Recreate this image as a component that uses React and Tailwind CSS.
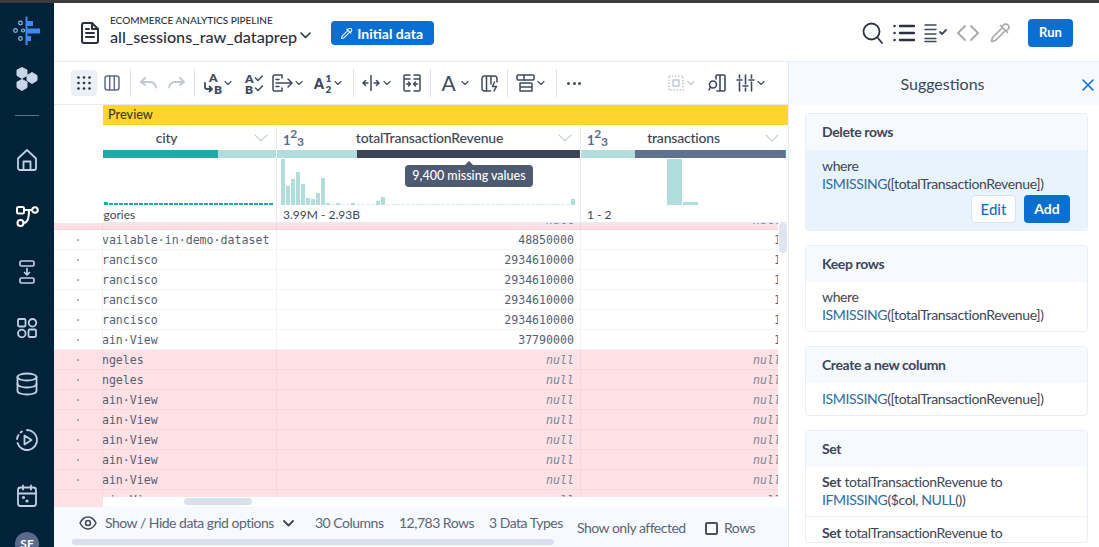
import React from "react";

const S = ({ w, h, vb, children, className = "", sw = 1.6 }) => (
  <svg width={w} height={h} viewBox={vb || `0 0 ${w} ${h}`} fill="none" stroke="currentColor" strokeWidth={sw} strokeLinecap="round" strokeLinejoin="round" className={`shrink-0 ${className}`}>{children}</svg>
);
const Chev = ({ className = "" }) => (
  <S w={8} h={6} sw={1.1} className={className}><path d="M1 1.5 4 4.5 7 1.5" /></S>
);
const Divider = ({ ml }) => <div className={`w-px h-[28px] bg-[#d9e1ee] shrink-0 ${ml}`} />;

const LabelText = ({ x, y, size = 10, children }) => (
  <text x={x} y={y} fontSize={size} fontWeight="800" fill="currentColor" stroke="none" fontFamily="Lato, sans-serif">{children}</text>
);

function Sidebar() {
  const c = "text-[#c3d0e4]";
  return (
    <div className="w-[54px] shrink-0 bg-[#00233a] flex flex-col items-center overflow-hidden h-[544px]">
      <div className="h-[54px] flex items-center justify-center shrink-0">
        <svg width="30" height="30" viewBox="0 0 30 30" fill="none">
          <rect x="13.500" y="1.500" width="2" height="28.500" fill="#3f88ee" />
          <rect x="14" y="6" width="7" height="5" fill="#3f88ee" />
          <rect x="14" y="13.500" width="14" height="5" fill="#3f88ee" />
          <rect x="14" y="21" width="5" height="5" fill="#3f88ee" />
          <g stroke="#8fbaf2" strokeWidth="1.200">
            <circle cx="8.500" cy="8" r="1.800" /><circle cx="3.500" cy="15.500" r="1.800" /><circle cx="11" cy="15.500" r="1.500" /><circle cx="8.500" cy="23.500" r="1.800" />
          </g>
        </svg>
      </div>
      <div className="h-[44px] flex items-center justify-center shrink-0">
        <svg width="22" height="26" viewBox="0 0 22 26" fill="#c9d5e8">
          <path d="M6 1.500 11 4v5.500L6 12.500 1 9.500V4z" stroke="#c9d5e8" strokeWidth="1" strokeLinejoin="round" />
          <path d="M16 6.500 21 9.500v5l-5 3-5-3v-5z" stroke="#c9d5e8" strokeWidth="1" strokeLinejoin="round" />
          <path d="M6 13.500 11 16v5.500L6 24.500 1 21.500V16z" stroke="#c9d5e8" strokeWidth="1" strokeLinejoin="round" />
        </svg>
      </div>
      <div className="w-[24px] h-px bg-[#5d7288] mt-[14px] mb-[16px] shrink-0" />
      <div className={`h-[56px] flex items-center justify-center shrink-0 ${c}`}>
        <S w={22} h={24} sw={1.8}><path d="M2 10.500 11 2l9 8.500V20a2 2 0 0 1-2 2H4a2 2 0 0 1-2-2z" /><path d="M7.500 22v-8.500h7V22" /></S>
      </div>
      <div className="h-[56px] flex items-center justify-center shrink-0 text-white">
        <S w={24} h={24} sw={2}><rect x="2" y="3" width="7" height="6.500" rx="1.500" /><circle cx="20" cy="6" r="2.800" /><circle cx="5.500" cy="19" r="3" /><path d="M9 6h8M14 6.500c0 7-1 12.500-5.500 12.500" /></S>
      </div>
      <div className={`h-[56px] flex items-center justify-center shrink-0 ${c}`}>
        <S w={16} h={24} sw={1.7}><rect x="1" y="1" width="14" height="5" rx="1.500" /><rect x="1" y="18" width="14" height="5" rx="1.500" /><path d="M8 8.500v6M5.500 12.500 8 15l2.500-2.500" /></S>
      </div>
      <div className={`h-[56px] flex items-center justify-center shrink-0 ${c}`}>
        <S w={22} h={22} sw={1.8}><rect x="2" y="2" width="7.500" height="7.500" rx="1.200" /><circle cx="16.500" cy="5.800" r="3.800" /><circle cx="5.800" cy="16.500" r="3.800" /><rect x="12.500" y="12.500" width="7.500" height="7.500" rx="1.200" /></S>
      </div>
      <div className={`h-[56px] flex items-center justify-center shrink-0 ${c}`}>
        <S w={22} h={24} sw={1.8}><ellipse cx="11" cy="5" rx="9.500" ry="3.500" /><path d="M1.500 5v14c0 2 4.300 3.500 9.500 3.500s9.500-1.500 9.500-3.500V5" /><path d="M1.500 12c0 2 4.300 3.500 9.500 3.500s9.500-1.500 9.500-3.500" /></S>
      </div>
      <div className={`h-[56px] flex items-center justify-center shrink-0 ${c}`}>
        <S w={24} h={24} sw={1.8}><path d="M12 2a10 10 0 1 1-9.500 13" /><path d="M2 11a10 10 0 0 1 1.500-4M5.500 4.500 7 3.500" /><path d="M9.500 7.500v9l7-4.500z" /></S>
      </div>
      <div className={`h-[56px] flex items-center justify-center shrink-0 ${c}`}>
        <S w={22} h={24} sw={1.8}><rect x="2" y="3.500" width="18" height="18.500" rx="2.500" /><path d="M2 9.500h18M7 1.500v4M15 1.500v4" /><circle cx="7.500" cy="13.500" r=".7" /><circle cx="11" cy="17" r=".7" /></S>
      </div>
      <div className="w-[24px] h-[24px] rounded-full bg-[#5b6a8a] text-white text-[12px] font-bold flex items-center justify-center shrink-0 mt-[8px]">SF</div>
    </div>
  );
}

const Dropper = ({ size, sw }) => (
  <S w={size} h={size} vb="0 0 22 22" sw={sw}>
    <path d="M13 4.500l1.500-1.500a3 3 0 0 1 4.500 4.500L17.500 9M11.500 3.500l7 7" />
    <path d="M13 6 3.500 15.500 2.500 19.500 6.500 18.500 16 9" />
  </S>
);

function Header() {
  return (
    <div className="h-[59px] shrink-0 border-b border-[#e6ebf5] flex items-center relative pt-[2px]">
      <div className="ml-[27px] text-[#2b3140]">
        <S w={18} h={22} sw={2}><path d="M3 1h8l6 6v12a2 2 0 0 1-2 2H3a2 2 0 0 1-2-2V3a2 2 0 0 1 2-2z" /><path d="M11 1v6h6M5 11h8M5 15h8M5 7h3" /></S>
      </div>
      <div className="ml-[11px] flex flex-col mt-[-6px]">
        <div className="text-[10px] leading-[14px] text-[#2b3140] font-medium">ECOMMERCE ANALYTICS PIPELINE</div>
        <div className="text-[16.200px] leading-[20px] text-[#2b3140] font-medium flex items-center">all_sessions_raw_dataprep
          <S w={11} h={7} sw={1.6} className="ml-[3px] mb-[4px]"><path d="M1 1l4.500 4.500L10 1" /></S>
        </div>
      </div>
      <div className="ml-[20px] h-[24px] w-[103px] rounded bg-[#0b6fd2] text-white text-[14px] font-bold flex items-center justify-center gap-[4px] pr-[2px]">
        <Dropper size={13} sw={1.700} />
        Initial data
      </div>
      <div className="ml-auto flex items-center mr-[26px]">
        <div className="text-[#2b3140] mr-[1px]"><S w={21} h={22} sw={1.8}><circle cx="9.500" cy="9.500" r="8" /><path d="M15.500 15.500 20 21" /></S></div>
        <div className="ml-[9px] text-[#2b3140]"><S w={22} h={20} sw={1.8}><path d="M7 3h14M7 10h14M7 17h14M1.500 3h.1M1.500 10h.1M1.500 17h.1" strokeWidth="2.400" /></S></div>
        <div className="ml-[9px] text-[#3d4657]"><S w={24} h={20} sw={1.4}><path d="M1 2h11M1 6.500h11M1 11h11M1 15.500h11M1 18.500h11" /><path d="M16 9l2 2 4-4" strokeWidth="1.800" /></S></div>
        <div className="ml-[9px] text-[#a9a9a9]"><S w={22} h={16} sw={1.8}><path d="M8 1 1 8l7 7M14 1l7 7-7 7" /></S></div>
        <div className="ml-[10px] text-[#a9a9a9]"><Dropper size={22} sw={1.700} /></div>
        <div className="ml-[17px] w-[45px] h-[28px] rounded bg-[#0b6fd2] text-white text-[13px] font-bold flex items-center justify-center">Run</div>
      </div>
    </div>
  );
}

function Toolbar() {
  return (
    <div className="h-[43px] shrink-0 border-b border-[#e6ebf5] flex items-center text-[#3d4a60]">
      <div className="ml-[17px] w-[26px] h-[26px] rounded bg-[#eaeff8] flex items-center justify-center text-[#2b3140] shrink-0">
        <svg width="14" height="14" viewBox="0 0 14 14" fill="currentColor">
          {[1.5, 7, 12.5].flatMap((y) => [1.5, 7, 12.5].map((x) => <circle key={`${x}-${y}`} cx={x} cy={y} r="1.300" />))}
        </svg>
      </div>
      <div className="ml-[7px] text-[#5f6e90]"><S w={16} h={16} sw={1.5}><rect x="1" y="1" width="14" height="14" rx="2.500" /><path d="M5.700 1v14M10.300 1v14" /></S></div>
      <Divider ml="ml-[10px]" />
      <div className="ml-[9px] text-[#c3c8d0]"><S w={17} h={12} sw={1.800}><path d="M5 1 1 5l4 3" /><path d="M1.500 5H10c3.500 0 5.500 2.500 6 5.500" /></S></div>
      <div className="ml-[11px] text-[#c3c8d0]"><S w={17} h={12} sw={1.800}><path d="M12 1l4 4-4 3" /><path d="M15.500 5H7c-3.500 0-5.500 2.500-6 5.500" /></S></div>
      <Divider ml="ml-[9px]" />
      <div className="ml-[8px]"><S w={20} h={24} sw={1.800}><LabelText x="6" y="10.500" size={12}>A</LabelText><LabelText x="11" y="22.500" size={12}>B</LabelText><path d="M2 12v4a2 2 0 0 0 2 2h4.500M6.500 15.500 9 18l-2.500 2.500" /></S></div>
      <Chev className="ml-[1px]" />
      <div className="ml-[13px]"><S w={18} h={21} sw={1.500}><LabelText x="0" y="9.500" size={12}>A</LabelText><LabelText x="0" y="20.500" size={12}>B</LabelText><path d="M10.500 5l2.500 2.500L17.500 3M10.500 15l2.500 2.500 4.500-4.500" /></S></div>
      <div className="ml-[9px]"><S w={21} h={18} sw={1.500}><path d="M10 1H2.500A1.500 1.500 0 0 0 1 2.500v13A1.500 1.500 0 0 0 2.500 17H10M4 5.500h3M4 9h3M4 12.500h3M10 1v3M10 14v3M7 9h13M16 5l4 4-4 4" /></S></div>
      <Chev className="ml-[2px]" />
      <div className="ml-[11px]"><S w={18} h={21} sw={1.500}><LabelText x="0" y="15.500" size={14}>A</LabelText><LabelText x="11.500" y="9" size={10}>1</LabelText><LabelText x="11.500" y="20" size={10}>2</LabelText></S></div>
      <Chev className="ml-[2px]" />
      <Divider ml="ml-[11px]" />
      <div className="ml-[8px]"><S w={18} h={16} sw={1.500}><path d="M9 .5v15M6 8H1M3.500 5.500 1 8l2.500 2.500M12 8h5M14.500 5.500 17 8l-2.500 2.500" strokeWidth="1.500" /></S></div>
      <Chev className="ml-[3px]" />
      <div className="ml-[12px]"><S w={18} h={18} sw={1.500}><path d="M7 1H2a1 1 0 0 0-1 1v14a1 1 0 0 0 1 1h5M11 1h5a1 1 0 0 1 1 1v14a1 1 0 0 1-1 1h-5M1 5h6M11 5h6M3.500 10h4M5.500 8l2 2-2 2M14.500 10h-4M12.500 8l-2 2 2 2" /></S></div>
      <Divider ml="ml-[9px]" />
      <div className="ml-[11px] text-[21px] leading-[22px] font-normal w-[13px] flex justify-center">A</div>
      <Chev className="ml-[6px]" />
      <div className="ml-[12px]"><S w={17} h={17} sw={1.500}><path d="M16 7V3.500A2.500 2.500 0 0 0 13.500 1h-10A2.500 2.500 0 0 0 1 3.500v10A2.500 2.500 0 0 0 3.500 16h6M5.500 1v15M10 1v8M13.500 7l-2 4.500h4L13 16" /></S></div>
      <Divider ml="ml-[9px]" />
      <div className="ml-[8px]"><S w={19} h={18} sw={1.500}><rect x="1" y="1" width="17" height="5" rx="1" /><path d="M4 9h11a1 1 0 0 1 1 1v7H4zM4 13h12M8 1v5" /></S></div>
      <Chev className="ml-[2px]" />
      <Divider ml="ml-[11px]" />
      <div className="ml-[10px] w-[14px] flex justify-between">
        <span className="w-[3px] h-[3px] rounded-full bg-[#3d4a60]" /><span className="w-[3px] h-[3px] rounded-full bg-[#3d4a60]" /><span className="w-[3px] h-[3px] rounded-full bg-[#3d4a60]" />
      </div>
      <div className="ml-[87px] text-[#c3c8d0]"><S w={16} h={16} sw={1.500}><rect x="1" y="1" width="14" height="14" strokeDasharray="1.500 1.500" strokeLinecap="butt" /><rect x="5" y="5" width="6" height="6" /></S></div>
      <Chev className="ml-[3px] text-[#c3c8d0]" />
      <div className="ml-[13px]"><S w={18} h={18} sw={1.600}><path d="M8 5V2a1 1 0 0 1 1-1h7a1 1 0 0 1 1 1v14a1 1 0 0 1-1 1H9M12 1v16" /><circle cx="5" cy="10.500" r="3.500" /><path d="M2.500 13 1 16" /></S></div>
      <div className="ml-[10px]"><S w={19} h={18} sw={1.500}><path d="M3.500 1v3M3.500 8v9M9.500 1v9M9.500 14v3M15.500 1v3M15.500 8v9M1 6h5M7 12h5M13 6h5" strokeWidth="1.600" /></S></div>
      <Chev className="ml-[2px]" />
    </div>
  );
}

const hist = [46, 19, 26, 33, 21, 7, 6, 12, 27, 2, 1, 2, 1, 1, 2, 1, 1, 1, 1, 4, 8, 1, 1, 1, 1, 1, 1, 1, 1, 1, 1, 1, 1, 1, 1, 1, 1, 1, 1, 1, 1, 1, 1, 1, 1, 1, 1, 1, 1, 1, 1, 1, 1, 1, 1, 1, 1, 1, 6];
const city = Array.from({ length: 34 }, (_, i) => i);

const TypeIcon = () => (
  <span className="text-[#5b6a90] font-bold leading-none flex items-start w-[18px] h-[21px] text-[13px]">
    <span className="mt-[7px]">1</span><span className="text-[12px] mt-[1px]">2</span><span className="text-[12px] mt-[9px]">3</span>
  </span>
);
const HeadChev = () => (
  <S w={14} h={8} sw={1.100} className="text-[#c5cfe0]"><path d="M1 1l6 6 6-6" /></S>
);

function GridHead() {
  const cols = "grid grid-cols-[174px_304px_207px]";
  return (
    <div className="ml-[49px] shrink-0 relative">
      <div className="h-[20px] bg-[#fed52f] text-[12.700px] font-medium text-[#3d3a20] flex items-center pl-[5px]">Preview</div>
      <div className={`${cols} h-[25px] text-[14px] tracking-[-0.2px] font-medium text-[#3d4657]`}>
        <div className="flex items-center relative pr-[8px] border-r border-[#e6ebf5]">
          <span className="w-[127px] text-center">city</span>
          <span className="ml-auto"><HeadChev /></span>
        </div>
        <div className="flex items-center pl-[6px] pr-[8px] border-r border-[#e6ebf5]">
          <TypeIcon /><span className="flex-1 text-center">totalTransactionRevenue</span><HeadChev />
        </div>
        <div className="flex items-center pl-[6px] pr-[9px]">
          <TypeIcon /><span className="flex-1 text-center mr-[3px]">transactions</span><HeadChev />
        </div>
      </div>
      <div className={`${cols} h-[8px]`}>
        <div className="flex pr-px"><div className="w-[115px] bg-[#21a8a8]" /><div className="flex-1 bg-[#b1dedc]" /></div>
        <div className="flex pr-px"><div className="w-[80px] bg-[#b1dedc]" /><div className="flex-1 bg-[#3b4559]" /></div>
        <div className="flex pr-[2px]"><div className="w-[54px] bg-[#b1dedc]" /><div className="w-[150px] bg-[#62708f]" /><div className="w-px bg-[#21a8a8]" /></div>
      </div>
      <div className={`${cols} h-[47px]`}>
        <div className="flex items-end gap-px pl-[1px] border-r border-[#e6ebf5] overflow-hidden">
          {city.map((i) => <div key={i} className={`w-[4px] bg-[#21a8a8] ${i === 0 ? "h-[3px]" : "h-[2px]"}`} />)}
        </div>
        <div className="flex items-end gap-px pl-[4px] border-r border-[#e6ebf5] overflow-hidden">
          {hist.map((h, i) => <div key={i} className={`w-[4px] shrink-0 ${h === 1 ? "bg-[#d6efed]" : "bg-[#b1dedc]"}`} style={{ height: h }} />)}
        </div>
        <div className="flex items-end gap-px pl-[86px]">
          <div className="w-[15px] h-[46px] bg-[#b1dedc]" /><div className="w-[15px] h-[3px] bg-[#b1dedc]" />
        </div>
      </div>
      <div className={`${cols} h-[18px] text-[12px] leading-[20px] text-[#3d4657] border-b border-[#e6ebf5]`}>
        <div className="border-r border-[#e6ebf5] overflow-hidden"><span className="block ml-[-24px] whitespace-nowrap">Categories</span></div>
        <div className="pl-[6px] border-r border-[#e6ebf5]">3.99M - 2.93B</div>
        <div className="pl-[6px]">1 - 2</div>
      </div>
      <div className="absolute left-[302px] top-[60px] w-[128px] h-[22px] rounded bg-[#4e5a72] text-white text-[12.500px] flex items-center justify-center font-medium">
        <span className="absolute top-[-4px] left-[60px] w-0 h-0 border-x-[4px] border-x-transparent border-b-[4px] border-b-[#4e5a72]" />
        9,400 missing values
      </div>
    </div>
  );
}

const rowsData = [
  ["Not·available·in·demo·dataset", "48850000", "1"],
  ["San·Francisco", "2934610000", "1"],
  ["San·Francisco", "2934610000", "1"],
  ["San·Francisco", "2934610000", "1"],
  ["San·Francisco", "2934610000", "1"],
  ["Mountain·View", "37790000", "1"],
  ["Los·Angeles", null, null],
  ["Los·Angeles", null, null],
  ["Mountain·View", null, null],
  ["Mountain·View", null, null],
  ["Mountain·View", null, null],
  ["Mountain·View", null, null],
  ["Mountain·View", null, null],
  ["Mountain·View", null, null],
];

function Row({ r }) {
  const pink = r[1] === null;
  const mono = { fontFamily: "'DejaVu Sans Mono', monospace" };
  const line = pink ? "border-[#f8d5d9]" : "border-[#f0f2f6]";
  const Val = ({ v }) =>
    v === null ? <span className="italic text-[#7b8496]">null</span> : <span className="text-[#565f72]">{v}</span>;
  return (
    <div className={`flex h-[20px] shrink-0 border-b text-[11.600px] leading-[20px] ${pink ? "bg-[#fee1e5]" : "bg-white"} ${line}`} style={mono}>
      <div className={`w-[49px] text-center text-[#8a93a5] border-r ${line}`}>·</div>
      <div className={`w-[174px] overflow-hidden border-r whitespace-nowrap text-[#565f72] ${line}`}><span className="block ml-[-36px]">{r[0]}</span></div>
      <div className={`w-[304px] text-right pr-[6px] border-r ${line}`}><Val v={r[1]} /></div>
      <div className="w-[207px] text-right pr-[7px] shrink-0"><Val v={r[2]} /></div>
    </div>
  );
}

function GridBody() {
  return (
    <div className="flex-1 min-h-0 relative overflow-hidden flex flex-col">
      <div className="h-[7px] shrink-0 overflow-hidden">
        <div className="mt-[-13px]"><Row r={["", null, null]} /></div>
      </div>
      {rowsData.map((r, i) => <Row key={i} r={r} />)}
      <div className="absolute right-0 top-0 bottom-0 w-[10px] bg-white" />
      <div className="absolute right-[1px] top-0 w-[8px] h-[30px] rounded bg-[#dde5f1]" />
      <div className="absolute left-[49px] right-0 bottom-0 h-[10px] bg-white" />
      <div className="absolute left-[130px] bottom-[2px] w-[68px] h-[7px] rounded bg-[#d8e0ee]" />
      <div className="absolute left-0 bottom-0 w-[49px] h-[10px] bg-[#fee1e5]" />
    </div>
  );
}

function Footer() {
  const t = "shrink-0 whitespace-nowrap leading-[20px]";
  return (
    <div className="h-[40px] shrink-0 bg-[#f6f9fe] relative flex items-start text-[14px] tracking-[-0.5px] text-[#5b6578]">
      <div className="ml-[25px] mt-[9px] text-[#3d4657]"><S w={18} h={14} sw={1.500}><path d="M1 7c2-4 5-6 8-6s6 2 8 6c-2 4-5 6-8 6S3 11 1 7z" /><circle cx="9" cy="7" r="2.500" /></S></div>
      <span className={`ml-[8px] mt-[6px] w-[167px] ${t}`}>Show / Hide data grid options</span>
      <S w={11} h={7} sw={1.800} className="ml-[11px] mt-[13px] text-[#3d4657]"><path d="M1 1l4.500 4.500L10 1" /></S>
      <span className={`ml-[21px] mt-[6px] w-[67px] ${t}`}>30 Columns</span>
      <span className={`ml-[17px] mt-[6px] w-[73px] ${t}`}>12,783 Rows</span>
      <span className={`ml-[17px] mt-[6px] w-[73px] ${t}`}>3 Data Types</span>
      <span className={`ml-[15px] mt-[11px] w-[108px] ${t}`}>Show only affected</span>
      <div className="ml-[20px] mt-[15px] w-[13px] h-[13px] rounded-[2px] border-2 border-[#4a5365] bg-white shrink-0" />
      <span className={`ml-[6px] mt-[11px] ${t}`}>Rows</span>
      <div className="absolute left-[18px] bottom-[2px] w-[482px] h-[6px] rounded-full bg-[#d8e0ee]" />
    </div>
  );
}

const Fn = ({ children }) => <span className="text-[#2a6ca8]">{children}</span>;
const Expr = () => <div><Fn>ISMISSING</Fn>([totalTransactionRevenue])</div>;

const Card = ({ title, children, className = "" }) => (
  <div className={`ml-[16px] mr-[11px] rounded border border-[#e8edf6] overflow-hidden shrink-0 ${className}`}>
    <div className="h-[36px] bg-[#f6f9fe] flex items-center px-[16px] text-[14px] font-bold text-[#3d4657]">{title}</div>
    {children}
  </div>
);

function Panel() {
  return (
    <div className="w-[311px] shrink-0 border-l border-[#e6ebf5] flex flex-col overflow-hidden text-[#3d4657] text-[14px] tracking-[-0.37px] leading-[18px]">
      <div className="h-[43px] shrink-0 bg-[#f6f9fe] flex items-center justify-center relative text-[16px] tracking-normal mb-[8px] pr-[3px]">
        Suggestions
        <div className="absolute right-[5px] top-[17px] text-[#0b6fd2]"><S w={12} h={12} sw={1.600}><path d="M1 1l10 10M11 1 1 11" /></S></div>
      </div>
      <Card title="Delete rows">
        <div className="bg-[#e7f3fd] h-[80px] px-[16px] pt-[7px]">
          <div>where</div>
          <Expr />
          <div className="flex justify-end gap-[8px] mt-[2px] pr-[1px] tracking-normal">
            <div className="w-[45px] h-[28px] rounded bg-white border border-[#dbe3f0] text-[#0b6fd2] text-[15px] font-medium flex items-center justify-center">Edit</div>
            <div className="w-[46px] h-[28px] rounded bg-[#0b6fd2] text-white font-bold flex items-center justify-center">Add</div>
          </div>
        </div>
      </Card>
      <Card title="Keep rows" className="mt-[14px]">
        <div className="h-[49px] px-[16px] pt-[6px]"><div>where</div><Expr /></div>
      </Card>
      <Card title="Create a new column" className="mt-[14px]">
        <div className="h-[32px] px-[16px] pt-[7px]"><Expr /></div>
      </Card>
      <Card title="Set" className="mt-[14px]">
        <div className="px-[16px] pt-[6px] pb-[7px] border-b border-[#e8edf6]">
          <div><b>Set</b> totalTransactionRevenue to</div>
          <div><Fn>IFMISSING</Fn>($col, <Fn>NULL</Fn>())</div>
        </div>
        <div className="px-[16px] pt-[7px]"><div><b>Set</b> totalTransactionRevenue to</div></div>
      </Card>
    </div>
  );
}

export default function App() {
  return (
    <div className="w-[1099px] h-[547px] overflow-hidden bg-white flex flex-col" style={{ fontFamily: "Lato, sans-serif" }}>
      <div className="h-[3px] shrink-0 bg-[#3c3c3c]" />
      <div className="flex flex-1 min-h-0">
        <Sidebar />
        <div className="flex-1 min-w-0 flex flex-col">
          <Header />
          <div className="flex flex-1 min-h-0">
            <div className="w-[734px] shrink-0 flex flex-col">
              <Toolbar />
              <GridHead />
              <GridBody />
              <Footer />
            </div>
            <Panel />
          </div>
        </div>
      </div>
    </div>
  );
}
